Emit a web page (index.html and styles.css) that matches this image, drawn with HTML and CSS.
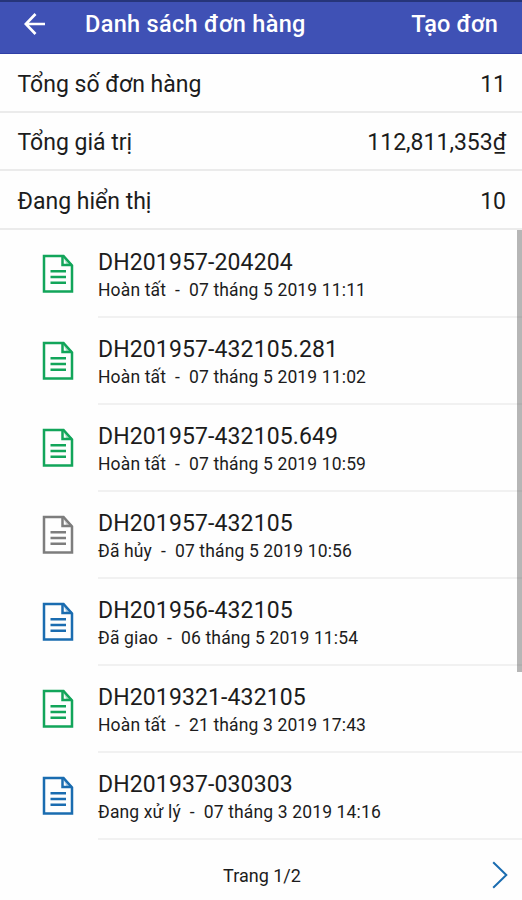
FILE: index.html
```html
<!DOCTYPE html>
<html lang="vi">
<head>
<meta charset="utf-8">
<title>Danh sách đơn hàng</title>
<link rel="stylesheet" href="styles.css">
</head>
<body>
<svg width="0" height="0" class="defs">
  <symbol id="doc" viewBox="0 0 32 40">
    <path d="M2 2H21.5L30 11.5V37.5H2Z" fill="none" stroke="currentColor" stroke-width="2.5"/>
    <path d="M20.5 2V11H30" fill="none" stroke="currentColor" stroke-width="2.5"/>
    <path d="M20.5 2L30 11H25Z" fill="currentColor" fill-opacity=".35"/>
    <path d="M8.5 17.2H24M8.5 23H24M8.5 28.8H24" fill="none" stroke="currentColor" stroke-width="2.5"/>
  </symbol>
</svg>
<header class="appbar">
  <svg class="back" viewBox="0 0 22 22"><path d="M21 11H2M11.5 1L1.8 11L11.5 21" fill="none" stroke="#fff" stroke-width="2.7"/></svg>
  <h1>Danh sách đơn hàng</h1>
  <span class="create">Tạo đơn</span>
</header>
<section class="summary">
  <div class="stat"><span>Tổng số đơn hàng</span><span>11</span></div>
  <div class="stat"><span>Tổng giá trị</span><span>112,811,353₫</span></div>
  <div class="stat"><span>Đang hiển thị</span><span>10</span></div>
</section>
<main class="orders">
  <article class="order done"><svg class="icon"><use href="#doc"/></svg><div class="info"><h2>DH201957-204204</h2><p>Hoàn tất&nbsp; -&nbsp; 07 tháng 5 2019 11:11</p></div></article>
  <article class="order done"><svg class="icon"><use href="#doc"/></svg><div class="info"><h2>DH201957-432105.281</h2><p>Hoàn tất&nbsp; -&nbsp; 07 tháng 5 2019 11:02</p></div></article>
  <article class="order done"><svg class="icon"><use href="#doc"/></svg><div class="info"><h2>DH201957-432105.649</h2><p>Hoàn tất&nbsp; -&nbsp; 07 tháng 5 2019 10:59</p></div></article>
  <article class="order cancelled"><svg class="icon"><use href="#doc"/></svg><div class="info"><h2>DH201957-432105</h2><p>Đã hủy&nbsp; -&nbsp; 07 tháng 5 2019 10:56</p></div></article>
  <article class="order active"><svg class="icon"><use href="#doc"/></svg><div class="info"><h2>DH201956-432105</h2><p>Đã giao&nbsp; -&nbsp; 06 tháng 5 2019 11:54</p></div></article>
  <article class="order done"><svg class="icon"><use href="#doc"/></svg><div class="info"><h2>DH2019321-432105</h2><p>Hoàn tất&nbsp; -&nbsp; 21 tháng 3 2019 17:43</p></div></article>
  <article class="order active"><svg class="icon"><use href="#doc"/></svg><div class="info"><h2>DH201937-030303</h2><p>Đang xử lý&nbsp; -&nbsp; 07 tháng 3 2019 14:16</p></div></article>
  <div class="scrollbar"></div>
</main>
<footer class="pager">
  <span>Trang 1/2</span>
  <svg class="next" viewBox="0 0 16 28"><path d="M1.2 1.2L14.3 14L1.2 26.8" fill="none" stroke="#1a6cb0" stroke-width="2"/></svg>
</footer>
</body>
</html>
```

FILE: styles.css
```css
* { box-sizing: border-box; margin: 0; padding: 0; }
body {
  width: 522px;
  height: 900px;
  overflow: hidden;
  display: flex;
  flex-direction: column;
  background: #fefefe;
  color: #1c1c1c;
  font-family: Roboto, "Noto Sans", sans-serif;
}
.defs { position: absolute; }
.appbar {
  height: 54px;
  flex: none;
  display: flex;
  align-items: center;
  padding: 0 24px 8px 24px;
  background: #3f51b5;
  border-top: 2px solid #26357a;
  border-bottom: 1px solid #2f3fa6;
  color: #fff;
}
.back { width: 22px; height: 22px; }
.appbar h1 { margin-left: 39px; font-size: 23.5px; font-weight: 500; line-height: 28px; letter-spacing: 0.32px; }
.create { margin-left: auto; font-size: 23.5px; font-weight: 500; line-height: 28px; letter-spacing: 0.15px; }
.stat {
  height: 58.5px;
  padding: 4px 16px 0 17.5px;
  display: flex;
  align-items: center;
  justify-content: space-between;
  border-bottom: 2px solid #ebebeb;
  font-size: 23px;
}
.orders { position: relative; }
.order { height: 87px; display: flex; padding-left: 42px; }
.order:first-child { height: 88px; }
.order:first-child .info { padding-top: 19px; }
.icon { width: 32px; height: 40px; margin: 24px 24px 0 0; flex: none; }
.done { color: #12a55a; }
.cancelled { color: #7d7d7d; }
.active { color: #1a6cb0; }
.info { flex: 1; border-bottom: 2px solid #f1f1f1; padding-top: 18px; color: #1c1c1c; }
.info h2 { font-size: 23px; font-weight: 400; line-height: 28px; letter-spacing: 0.12px; }
.info p { font-size: 17.5px; line-height: 22px; margin-top: 2px; letter-spacing: 0.14px; }
.order + .order .icon { margin-top: 23px; }
.scrollbar { position: absolute; right: 0; top: 0; width: 5px; height: 442px; background: rgba(110, 110, 110, 0.5); }
.pager { flex: 1; position: relative; display: flex; justify-content: center; padding: 24px 0 0 2px; font-size: 18px; line-height: 24px; }
.next { position: absolute; right: 14px; top: 21px; width: 16px; height: 28px; }
```
